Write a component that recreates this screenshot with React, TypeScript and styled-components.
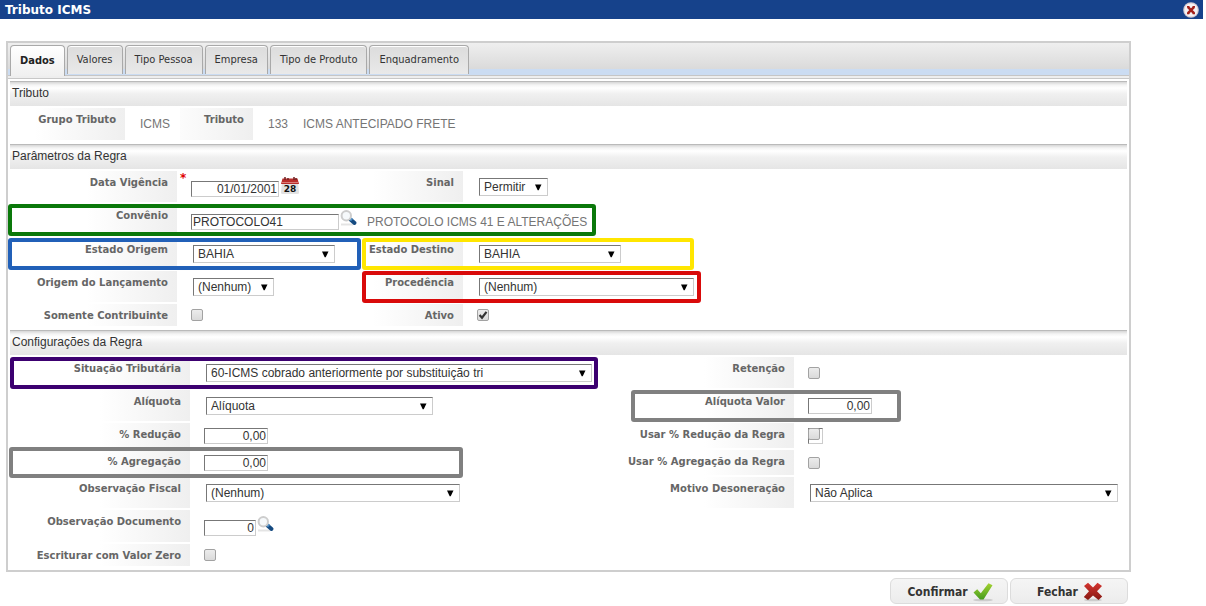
import React, { useId, useState } from 'react';
import styled, { createGlobalStyle, css } from 'styled-components';

const uiFont = '"DejaVu Sans Condensed", "DejaVu Sans", Tahoma, sans-serif';
const labelFont = '"DejaVu Sans", Verdana, sans-serif';
const fieldFont = '"Liberation Sans", Arial, sans-serif';

const GlobalStyle = createGlobalStyle`
  *, *::before, *::after { box-sizing: border-box; }
  body { margin: 0; background: #fff; font: 12px/16px ${fieldFont}; color: #333; }
`;

const TitleBar = styled.header`
  display: flex;
  align-items: center;
  justify-content: space-between;
  height: 19px;
  margin-right: 3px;
  padding: 0 4px 0 5px;
  background: #16428b;
`;

const Title = styled.h1`
  margin: 0;
  font: bold 12px/18px ${labelFont};
  color: #fff;
`;

const CloseButton = styled.button`
  display: flex;
  padding: 0;
  border: 0;
  background: none;
`;

const Main = styled.main`
  padding: 22px 75px 0 6px;
`;

const Panel = styled.form`
  border: 2px solid #cecece;
  background: #fff;
`;

const TabBar = styled.div`
  display: flex;
  align-items: flex-start;
  gap: 2px;
  height: 36px;
  padding: 2px 2px 0;
  border-bottom: 1px solid #c8c8c8;
  background: linear-gradient(
    #efefef 0, #dadada 26px, #cbdcf2 26px, #cbdcf2 32px,
    #c6c6c6 32px, #c6c6c6 33px, #eeeeee 33px
  );
`;

const Tab = styled.button<{ $active: boolean }>`
  height: 29px;
  padding: 0 9px;
  border: 1px solid #a9a9a9;
  border-bottom: 0;
  border-radius: 4px 4px 0 0;
  font: 11px/28px ${uiFont};
  white-space: nowrap;
  color: #333;
  background: linear-gradient(#dcdcdc, #e9e9e9);
  box-shadow: inset 0 1px #fff;
  ${(p) =>
    p.$active &&
    css`
      height: 31px;
      font-weight: bold;
      color: #222;
      background: linear-gradient(#fff, #f0f0f0);
    `}
`;

const Sections = styled.div`
  padding: 2px 2px 0;
`;

const Section = styled.section`
  padding-bottom: 4px;
`;

const SectionTitle = styled.h2`
  height: 25px;
  margin: 0 0 2px;
  padding-left: 2px;
  border-top: 1px solid #bababa;
  font: 12px/22px ${fieldFont};
  color: #333;
  background: linear-gradient(#d6d6d6 0, #f4f4f4 3px, #fff 6px, #f0f0f0 12px, #e5e5e5 100%);
`;

const Rows = styled.div`
  display: grid;
  gap: 2px;
`;

const Row = styled.div<{ $columns: string; $height: number }>`
  position: relative;
  display: grid;
  grid-template-columns: ${(p) => p.$columns};
  min-height: ${(p) => p.$height}px;
`;

const Label = styled.label`
  padding: 5px 9px 0 0;
  font: bold 10px/14px ${labelFont};
  text-align: right;
  white-space: nowrap;
  color: #666;
  background: linear-gradient(to right, #fff, #efefef) right / 90px 100% no-repeat;
`;

const Value = styled.div<{ $span?: number }>`
  position: relative;
  display: flex;
  align-items: center;
  min-width: 0;
  padding-left: 14px;
  grid-column: ${(p) => (p.$span ? `span ${p.$span}` : 'auto')};
`;

const Output = styled.output`
  margin: 0 14px 0 1px;
  white-space: nowrap;
  color: #757575;
`;

const sunken = css`
  border: 1px solid;
  border-color: #777 #ccc #ccc #777;
`;

const TextBox = styled.input<{ $width: number; $right?: boolean }>`
  width: ${(p) => p.$width}px;
  height: 16px;
  padding: 0 1px;
  ${sunken}
  font: 12px/14px ${fieldFont};
  text-align: ${(p) => (p.$right ? 'right' : 'left')};
  color: #333;
  background: #fff;
`;

const FieldWithIcon = styled.div`
  display: flex;
  align-items: flex-end;
  gap: 1px;
  height: 20px;
`;

const IconButton = styled.button`
  display: flex;
  align-self: flex-start;
  padding: 0;
  border: 0;
  background: none;
`;

const LookupText = styled.output`
  margin-left: 8px;
  white-space: nowrap;
  color: #757575;
`;

const Required = styled.span`
  position: absolute;
  top: 0;
  left: 3px;
  font: bold 12px/14px ${labelFont};
  color: #e00000;
`;

const SelectFrame = styled.span<{ $width: number }>`
  position: relative;
  flex: 0 1 ${(p) => p.$width}px;
  height: 18px;
  margin-left: 2px;

  svg {
    position: absolute;
    top: 6px;
    right: 6px;
    pointer-events: none;
  }
`;

const SelectBox = styled.select`
  display: block;
  width: 100%;
  height: 18px;
  padding: 0 18px 0 4px;
  ${sunken}
  border-radius: 0;
  appearance: none;
  font: 12px/16px ${fieldFont};
  color: #333;
  background: #fff;
`;

const TickFrame = styled.span<{ $boxed?: boolean }>`
  position: relative;
  display: block;
  width: 12px;
  height: 12px;

  ${(p) =>
    p.$boxed &&
    css`
      width: 15px;
      height: 16px;
      ${sunken}
    `}

  svg {
    position: absolute;
    top: 0;
    left: 0;
    pointer-events: none;
  }
`;

const TickBox = styled.input<{ $boxed?: boolean }>`
  display: block;
  width: 12px;
  height: 12px;
  margin: ${(p) => (p.$boxed ? '-1px' : '0')};
  border: 1px solid #a2a2a2;
  border-radius: 2px;
  appearance: none;
  background: linear-gradient(#ececec, #dadada);
`;

const Highlight = styled.span<{ $color: string; $left: number; $width: number; $outset?: number }>`
  position: absolute;
  z-index: 1;
  top: ${(p) => -(p.$outset ?? 0)}px;
  bottom: ${(p) => -(p.$outset ?? 1)}px;
  left: ${(p) => p.$left}px;
  width: ${(p) => p.$width}px;
  border: 4px solid ${(p) => p.$color};
  border-radius: 3px;
  pointer-events: none;
`;

const Actions = styled.div`
  display: flex;
  justify-content: flex-end;
  gap: 2px;
  padding: 6px 3px 0 0;
`;

const ActionButton = styled.button`
  display: flex;
  align-items: center;
  justify-content: center;
  gap: 4px;
  width: 118px;
  height: 26px;
  padding: 1px 0 0 3px;
  border: 1px solid #dcdcdc;
  border-radius: 6px;
  font: bold 12px/16px ${uiFont};
  color: #333;
  background: linear-gradient(#f5f5f5, #ececec);
`;

const CloseIcon = () => (
  <svg width="16" height="16" viewBox="0 0 16 16" aria-hidden="true">
    <circle cx="8" cy="8" r="7.8" fill="#d3cbd3" />
    <circle cx="8" cy="8" r="6.6" fill="#f5f2f4" />
    <path d="M4.8 4.8l6.4 6.6M11.2 4.8l-6.4 6.6" stroke="#a3211b" strokeWidth="2.5" />
    <path d="M4 4.6h2.4M9.6 4.6H12M4 11.6h2.4M9.6 11.6H12" stroke="#a3211b" strokeWidth="1.2" />
  </svg>
);

const SearchIcon = () => (
  <svg width="18" height="17" viewBox="0 0 18 17" aria-hidden="true">
    <path d="M1 14.5h12" stroke="#e4e4e4" strokeWidth="2" />
    <path d="M10.5 9.5l4 3.5" stroke="#154a80" strokeWidth="4" strokeLinecap="round" />
    <path d="M10.5 8.8l1.5 1.3" stroke="#4d8fc7" strokeWidth="3" />
    <circle cx="6.3" cy="5.8" r="4.7" fill="#f6f9fb" stroke="#cdcdcd" strokeWidth="2" />
  </svg>
);

const CalendarIcon = () => (
  <svg width="20" height="18" viewBox="0 0 20 18" aria-hidden="true">
    <path d="M1 15.5L2 5h16l1 10.500Q19 17 17.500 17h-15Q1 17 1 15.500z" fill="#e2e2e2" />
    <path d="M2.500 1.500h15L19 7H1z" fill="#b92d2b" />
    <path d="M1.500 5.500h17" stroke="#db7b76" />
    <path d="M5 0v3M8 1v2M14 0v3M16 1v2" stroke="#702020" strokeWidth="1.500" />
    <text x="10" y="15" textAnchor="middle" fontFamily="DejaVu Sans" fontWeight="bold" fontSize="9" fill="#111">
      28
    </text>
  </svg>
);

const ArrowIcon = () => (
  <svg width="8" height="7" viewBox="0 0 8 7" aria-hidden="true">
    <path d="M1 0.500h6.500L4.700 6.300h-1z" fill="#000" />
  </svg>
);

const TickIcon = () => (
  <svg width="12" height="12" viewBox="0 0 12 12" aria-hidden="true">
    <path d="M2.600 6l2.400 2.700L9.500 2.800" fill="none" stroke="#333" strokeWidth="2.200" />
  </svg>
);

const ConfirmIcon = () => (
  <svg width="22" height="20" viewBox="0 0 22 20" aria-hidden="true">
    <defs>
      <linearGradient id="confirmFill" x1="0" y1="0" x2="0" y2="1">
        <stop offset="0" stopColor="#a5d331" />
        <stop offset="1" stopColor="#449b1d" />
      </linearGradient>
    </defs>
    <ellipse cx="11" cy="18" rx="10" ry="1.300" fill="#cccccc" />
    <path d="M1.500 10.500L5.200 7.300l3.600 3.900L16.500 1.200l4 2L11.500 17.500H8z" fill="url(#confirmFill)" />
  </svg>
);

const CancelIcon = () => (
  <svg width="22" height="20" viewBox="0 0 22 20" aria-hidden="true">
    <defs>
      <linearGradient id="cancelFill" x1="0" y1="0" x2="0" y2="1">
        <stop offset="0" stopColor="#d63530" />
        <stop offset="1" stopColor="#851812" />
      </linearGradient>
    </defs>
    <ellipse cx="11" cy="18" rx="9" ry="1.300" fill="#cccccc" />
    <path
      d="M2 4L6 0.800 11 5.500l4.500-4.700L20 4 15 9.300 20.200 14.500 16.500 18 11 13.500 6 18 1.800 15 7 9.300z"
      fill="url(#cancelFill)"
    />
  </svg>
);

interface FieldProps {
  label: string;
  children: (id: string) => React.ReactNode;
  span?: number;
}

const Field = ({ label, children, span }: FieldProps) => {
  const id = useId();
  return (
    <>
      <Label htmlFor={id}>{label}</Label>
      <Value $span={span}>{children(id)}</Value>
    </>
  );
};

const SelectField = ({ label, option, width }: { label: string; option: string; width: number }) => (
  <Field label={label}>
    {(id) => (
      <SelectFrame $width={width}>
        <SelectBox id={id}>
          <option>{option}</option>
        </SelectBox>
        <ArrowIcon />
      </SelectFrame>
    )}
  </Field>
);

const NumberField = ({ label }: { label: string }) => (
  <Field label={label}>{(id) => <TextBox id={id} $width={64} $right defaultValue="0,00" />}</Field>
);

const TickField = ({ label, initial = false, boxed }: { label: string; initial?: boolean; boxed?: boolean }) => {
  const [checked, setChecked] = useState(initial);
  return (
    <Field label={label}>
      {(id) => (
        <TickFrame $boxed={boxed}>
          <TickBox
            id={id}
            type="checkbox"
            $boxed={boxed}
            checked={checked}
            onChange={(e) => setChecked(e.target.checked)}
          />
          {checked && <TickIcon />}
        </TickFrame>
      )}
    </Field>
  );
};

const tabs = ['Dados', 'Valores', 'Tipo Pessoa', 'Empresa', 'Tipo de Produto', 'Enquadramento'];

const taxColumns = '115px 55px 73px 1fr';
const ruleColumns = '167px 186px 100px 1fr';
const configColumns = '180px minmax(0, 1fr) 174px 333px';

export default function App() {
  const [active, setActive] = useState(tabs[0]);

  return (
    <>
      <GlobalStyle />
      <TitleBar>
        <Title>Tributo ICMS</Title>
        <CloseButton type="button" aria-label="Fechar janela">
          <CloseIcon />
        </CloseButton>
      </TitleBar>
      <Main>
        <Panel id="tributo" onSubmit={(e) => e.preventDefault()}>
          <TabBar role="tablist">
            {tabs.map((tab) => (
              <Tab
                key={tab}
                type="button"
                role="tab"
                aria-selected={tab === active}
                $active={tab === active}
                onClick={() => setActive(tab)}
              >
                {tab}
              </Tab>
            ))}
          </TabBar>
          <Sections>
            <Section>
              <SectionTitle>Tributo</SectionTitle>
              <Row $columns={taxColumns} $height={32}>
                <Field label="Grupo Tributo">{(id) => <Output id={id}>ICMS</Output>}</Field>
                <Field label="Tributo">
                  {(id) => (
                    <>
                      <Output id={id}>133</Output>
                      <Output>ICMS ANTECIPADO FRETE</Output>
                    </>
                  )}
                </Field>
              </Row>
            </Section>

            <Section>
              <SectionTitle>Parâmetros da Regra</SectionTitle>
              <Rows>
                <Row $columns={ruleColumns} $height={31}>
                  <Field label="Data Vigência">
                    {(id) => (
                      <>
                        <Required>*</Required>
                        <FieldWithIcon>
                          <TextBox id={id} $width={88} $right required defaultValue="01/01/2001" />
                          <IconButton type="button" aria-label="Abrir calendário">
                            <CalendarIcon />
                          </IconButton>
                        </FieldWithIcon>
                      </>
                    )}
                  </Field>
                  <SelectField label="Sinal" option="Permitir" width={69} />
                </Row>
                <Row $columns={ruleColumns} $height={32}>
                  <Field label="Convênio" span={3}>
                    {(id) => (
                      <FieldWithIcon>
                        <TextBox id={id} $width={148} defaultValue="PROTOCOLO41" />
                        <IconButton type="button" aria-label="Pesquisar convênio">
                          <SearchIcon />
                        </IconButton>
                        <LookupText>PROTOCOLO ICMS 41 E ALTERAÇÕES</LookupText>
                      </FieldWithIcon>
                    )}
                  </Field>
                  <Highlight $color="#0a780a" $left={-2} $width={588} $outset={0} />
                </Row>
                <Row $columns={ruleColumns} $height={31}>
                  <SelectField label="Estado Origem" option="BAHIA" width={142} />
                  <SelectField label="Estado Destino" option="BAHIA" width={142} />
                  <Highlight $color="#2160b8" $left={-2} $width={353} />
                  <Highlight $color="#ffe600" $left={352} $width={332} />
                </Row>
                <Row $columns={ruleColumns} $height={31}>
                  <SelectField label="Origem do Lançamento" option="(Nenhum)" width={81} />
                  <SelectField label="Procedência" option="(Nenhum)" width={215} />
                  <Highlight $color="#d90a0a" $left={352} $width={339} />
                </Row>
                <Row $columns={ruleColumns} $height={22}>
                  <TickField label="Somente Contribuinte" />
                  <TickField label="Ativo" initial />
                </Row>
              </Rows>
            </Section>

            <Section>
              <SectionTitle>Configurações da Regra</SectionTitle>
              <Rows>
                <Row $columns={configColumns} $height={31}>
                  <SelectField
                    label="Situação Tributária"
                    option="60-ICMS cobrado anteriormente por substituição tri"
                    width={386}
                  />
                  <TickField label="Retenção" />
                  <Highlight $color="#3c0070" $left={0} $width={588} />
                </Row>
                <Row $columns={configColumns} $height={31}>
                  <SelectField label="Alíquota" option="Alíquota" width={227} />
                  <NumberField label="Alíquota Valor" />
                  <Highlight $color="#808080" $left={621} $width={270} />
                </Row>
                <Row $columns={configColumns} $height={25}>
                  <NumberField label="% Redução" />
                  <TickField label="Usar % Redução da Regra" boxed />
                </Row>
                <Row $columns={configColumns} $height={25}>
                  <NumberField label="% Agregação" />
                  <TickField label="Usar % Agregação da Regra" />
                  <Highlight $color="#808080" $left={-1} $width={454} $outset={3} />
                </Row>
                <Row $columns={configColumns} $height={31}>
                  <SelectField label="Observação Fiscal" option="(Nenhum)" width={254} />
                  <SelectField label="Motivo Desoneração" option="Não Aplica" width={308} />
                </Row>
                <Row $columns={configColumns} $height={32}>
                  <Field label="Observação Documento">
                    {(id) => (
                      <FieldWithIcon>
                        <TextBox id={id} $width={52} $right defaultValue="0" />
                        <IconButton type="button" aria-label="Pesquisar observação">
                          <SearchIcon />
                        </IconButton>
                      </FieldWithIcon>
                    )}
                  </Field>
                </Row>
                <Row $columns={configColumns} $height={22}>
                  <TickField label="Escriturar com Valor Zero" />
                </Row>
              </Rows>
            </Section>
          </Sections>
        </Panel>
        <Actions>
          <ActionButton type="submit" form="tributo">
            Confirmar
            <ConfirmIcon />
          </ActionButton>
          <ActionButton type="button">
            Fechar
            <CancelIcon />
          </ActionButton>
        </Actions>
      </Main>
    </>
  );
}
